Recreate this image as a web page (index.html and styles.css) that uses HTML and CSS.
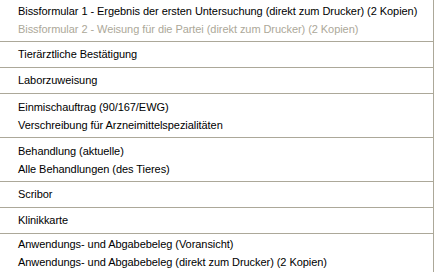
FILE: index.html
```html
<!DOCTYPE html>
<html lang="de">
<head>
<meta charset="utf-8">
<title>Drucken</title>
<link rel="stylesheet" href="styles.css">
</head>
<body>
<div class="list">
  <div class="group first">
    <div class="item">Bissformular 1 - Ergebnis der ersten Untersuchung (direkt zum Drucker) (2 Kopien)</div>
    <div class="item disabled">Bissformular 2 - Weisung für die Partei (direkt zum Drucker) (2 Kopien)</div>
  </div>
  <div class="group">
    <div class="item">Tierärztliche Bestätigung</div>
  </div>
  <div class="group">
    <div class="item">Laborzuweisung</div>
  </div>
  <div class="group pair">
    <div class="item">Einmischauftrag (90/167/EWG)</div>
    <div class="item">Verschreibung für Arzneimittelspezialitäten</div>
  </div>
  <div class="group pair">
    <div class="item">Behandlung (aktuelle)</div>
    <div class="item">Alle Behandlungen (des Tieres)</div>
  </div>
  <div class="group">
    <div class="item">Scribor</div>
  </div>
  <div class="group">
    <div class="item">Klinikkarte</div>
  </div>
  <div class="group last">
    <div class="item">Anwendungs- und Abgabebeleg (Voransicht)</div>
    <div class="item">Anwendungs- und Abgabebeleg (direkt zum Drucker) (2 Kopien)</div>
  </div>
</div>
</body>
</html>
```
FILE: styles.css
```css
html, body {
  margin: 0;
  padding: 0;
  background: #ffffff;
}
body {
  font-family: "Liberation Sans", Arial, sans-serif;
  font-size: 11px;
  letter-spacing: -0.06px;
  color: #000000;
  width: 436px;
  height: 272px;
  overflow: hidden;
}
.list {
  width: 433px;
  height: 272px;
  border-right: 1px solid #aca899;
  display: flex;
  flex-direction: column;
}
.group {
  display: flex;
  flex-direction: column;
  padding: 3px 0 4px 0;
  border-bottom: 1px solid #aca899;
}
.group.first {
  padding: 2px 0 3px 0;
}
.group.pair {
  padding: 4px 0 3px 0;
}
.group.last {
  padding-top: 1px;
  border-bottom: none;
}
.item {
  height: 18px;
  line-height: 18px;
  padding-left: 18px;
  white-space: nowrap;
}
.item.disabled {
  color: #aca899;
}
```
